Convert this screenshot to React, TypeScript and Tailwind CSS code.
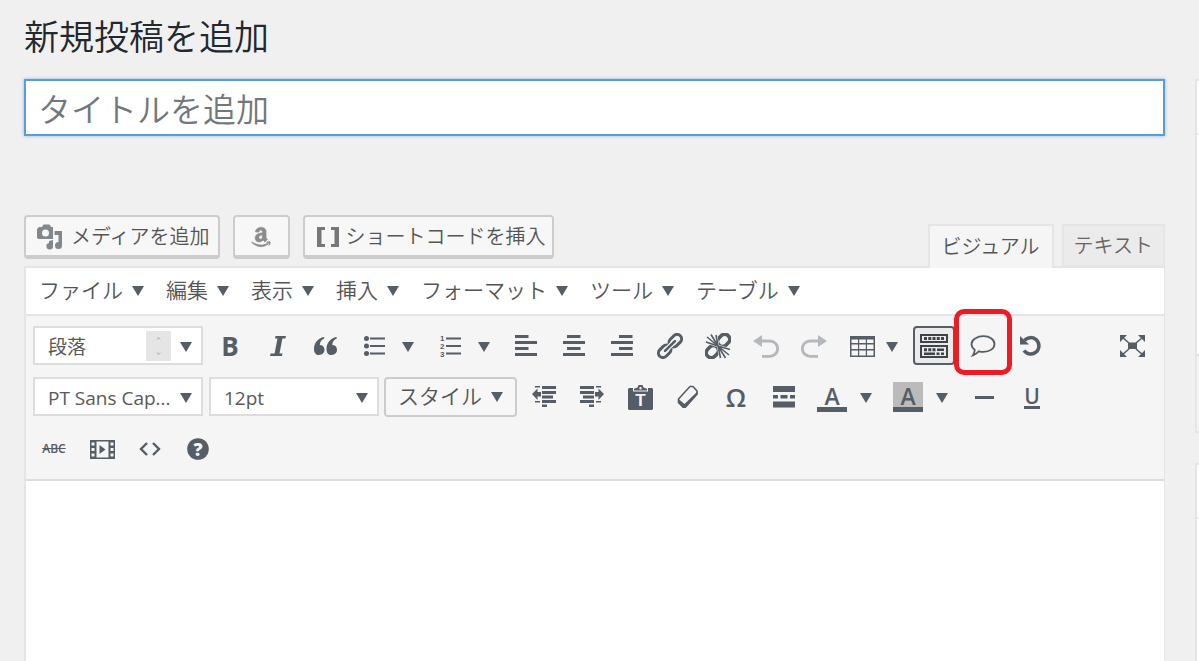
import React from 'react'
import { FaAmazon } from 'react-icons/fa'

interface IconProps {
    w: number
    h: number
    className?: string
    children: React.ReactNode
}

function Icon({ w, h, className, children }: IconProps) {
    return (
        <svg width={w} height={h} viewBox={`0 0 ${w} ${h}`} className={className} fill="currentColor" aria-hidden="true">
            {children}
        </svg>
    )
}

function Caret() {
    return (
        <Icon w={12} h={10} className="mt-[2px] shrink-0 text-[#555d66]">
            <path d="M0 0h12L6 10z" />
        </Icon>
    )
}

function MediaIcon() {
    return (
        <Icon w={26} h={26} className="text-[#82878c]">
            <path fillRule="evenodd" d="M2 3h3l1.500-2.500h6L14 3h2v12H1.500L0 14V5zM8.500 5.500a3.500 3.500 0 1 0 0 7a3.500 3.500 0 1 0 0-7z" />
            <path d="M17.500 7H25v14.500a3.500 3.500 0 1 1-3.500-3.500V11h-4z" />
            <path d="M12 17l4-1v6a3.300 3.300 0 1 1-4-3z" />
        </Icon>
    )
}

function BracketsIcon() {
    return (
        <Icon w={22} h={20} className="text-[#777]">
            <path d="M0 0h8v3H4.500v14H8v3H0zM22 0h-8v3h3.500v14H14v3h8z" />
        </Icon>
    )
}

function ItalicIcon() {
    return (
        <Icon w={16} h={20}>
            <path d="M5.500 0H16l-.6 2.600h-3L9.500 17.400h3l-.6 2.600H0l.6-2.600h4L7.500 2.600H5z" />
        </Icon>
    )
}

function QuoteIcon() {
    return (
        <Icon w={24} h={18}>
            <path d="M10 0C4 1 0 6 0 12c0 4 2 6 5 6s5.500-2 5.500-5.200S8.500 8 5.800 8C5.800 5 7.500 2.500 10.500 1.200z" />
            <path d="M22.500 0c-6 1-10 6-10 12c0 4 2 6 5 6s5.500-2 5.500-5.200S21 8 18.300 8c0-3 1.700-5.500 4.700-6.800z" />
        </Icon>
    )
}

function BulletIcon() {
    return (
        <Icon w={21} h={20}>
            <circle cx="2.5" cy="2.500" r="2.500" />
            <circle cx="2.500" cy="10" r="2.500" />
            <circle cx="2.500" cy="17.500" r="2.500" />
            <path d="M6 1.500h15v2H6zM6 9h15v2H6zM6 16.500h15v2H6z" />
        </Icon>
    )
}

function NumberIcon() {
    return (
        <Icon w={21} h={26}>
            <g fontFamily="Liberation Sans, sans-serif" fontSize="8" fontWeight="700">
                <text x="0" y="8">1</text>
                <text x="0" y="16">2</text>
                <text x="0" y="24">3</text>
            </g>
            <path d="M6 4.500h15v2H6zM6 12h15v2H6zM6 19.500h15v2H6z" />
        </Icon>
    )
}

function AlignIcon({ side }: { side: 'left' | 'center' | 'right' }) {
    const x = side === 'left' ? 0 : side === 'center' ? 4 : 8
    return (
        <Icon w={22} h={22}>
            <rect x={x} y="0" width="13.500" height="3" />
            <rect x="0" y="6" width="22" height="3" />
            <rect x={x} y="12" width="13.500" height="3" />
            <rect x="0" y="18" width="22" height="3" />
        </Icon>
    )
}

function LinkIcon() {
    return (
        <Icon w={26} h={26}>
            <g transform="rotate(-45 13 13)" fill="none" stroke="currentColor">
                <rect x="-1.500" y="8.500" width="14" height="9" rx="4.500" strokeWidth="3" />
                <rect x="13.500" y="8.500" width="14" height="9" rx="4.500" strokeWidth="3" />
                <path d="M6.500 13h13" stroke="#f5f5f5" strokeWidth="5" />
                <path d="M6 13h14" strokeWidth="2.600" strokeLinecap="round" />
            </g>
        </Icon>
    )
}

function UnlinkIcon() {
    const rays = 'M13 13L1 9M13 13L2 4M13 13L6 1.500M13 13L11 2M13 13l12 3.500M13 13l11 9M13 13l7.500 12M13 13l2.500 12'
    return (
        <Icon w={26} h={26}>
            <g transform="rotate(-45 13 13)" fill="none" stroke="currentColor" strokeWidth="3.600">
                <rect x="-1.500" y="8" width="13" height="10" rx="5" />
                <rect x="14.500" y="8" width="13" height="10" rx="5" />
            </g>
            <path d={rays} fill="none" stroke="#f5f5f5" strokeWidth="2.600" />
            <path d={rays} fill="none" stroke="currentColor" strokeWidth="1.600" />
        </Icon>
    )
}

function UndoIcon({ flip }: { flip?: boolean }) {
    return (
        <Icon w={26} h={23} className={flip ? '-scale-x-100' : ''}>
            <path d="M9 0v12L0 6z" />
            <path d="M8 6h9a7.500 7.500 0 0 1 0 15.300H9" fill="none" stroke="currentColor" strokeWidth="2.800" />
        </Icon>
    )
}

function TableIcon() {
    return (
        <Icon w={25} h={21}>
            <path fillRule="evenodd" d="M0 0h25v21H0zM1.500 3.500v3.500h6.500V3.500zM9.200 3.500v3.500h6.600V3.500zM17 3.500v3.500h6.500V3.500zM1.500 8.500v4.500h6.500V8.500zM9.200 8.500v4.500h6.600V8.500zM17 8.500v4.500h6.500V8.500zM1.500 14.500v5h6.500v-5zM9.200 14.500v5h6.600v-5zM17 14.500v5h6.500v-5z" />
        </Icon>
    )
}

function KeyboardIcon() {
    return (
        <Icon w={28} h={24} className="text-[#3f444b]">
            <g fill="none" stroke="currentColor" strokeWidth="2">
                <path d="M1 1h26v7H1zM1 12h26v11H1z" />
                <path d="M4 4.500h20" strokeWidth="3" strokeDasharray="3 1.250" />
                <path d="M4 15.700h12.500" strokeWidth="3" strokeDasharray="3 1.250" />
                <path d="M17 15.700h7M4 19.800h11M16.500 19.800h3M21 19.800h3" strokeWidth="2.600" />
            </g>
        </Icon>
    )
}

function BalloonIcon() {
    return (
        <Icon w={26} h={22}>
            <path
                d="M13.500 1.200c6.300 0 11 3.300 11 7.800s-4.700 7.900-11 7.900c-1.700 0-3.300-.2-4.700-.6C7.300 18.200 5.500 19.600 3 20.300c1-1.300 1.700-3 1.700-5.500C2.700 13.300 1.500 11.300 1.500 9c0-4.500 5.700-7.800 12-7.800z"
                fill="none"
                stroke="currentColor"
                strokeWidth="1.800"
            />
        </Icon>
    )
}

function ResetIcon() {
    return (
        <Icon w={22} h={22}>
            <path d="M4.500 5.500A8.200 8.200 0 1 1 4 15.500" fill="none" stroke="currentColor" strokeWidth="3.500" />
            <path d="M0 1v8.500h9z" />
        </Icon>
    )
}

function FullscreenIcon() {
    return (
        <Icon w={25} h={22}>
            <path d="M8 7.500h9v6.500H8z" />
            <path d="M0 0h7L0 7zM25 0h-7l7 7zM0 22h7l-7-7zM25 22h-7l7-7z" />
            <path d="M2 2l7 6M23 2l-7 6M2 20l7-6M23 20l-7-6" stroke="currentColor" strokeWidth="1.600" />
        </Icon>
    )
}

function OutdentIcon({ flip }: { flip?: boolean }) {
    return (
        <Icon w={24} h={24} className={flip ? '-scale-x-100' : ''}>
            <path d="M10 1h14v3H10zM10 6h14v3H10zM10 10.500h11v3H10zM10 15h14v3H10zM10 19.500h5v2.500h-5z" />
            <path d="M3 1h5v1.500H3zM3 16h5v1.500H3z" />
            <path d="M0 9l5.500-5.500V7H9v4.500H5.500V15z" />
        </Icon>
    )
}

function PasteIcon() {
    return (
        <Icon w={25} h={25}>
            <path d="M1 3h4v3.500h15V3h4l1 1v20l-1 1H1l-1-1V4z" />
            <path fillRule="evenodd" d="M6 5.500V3.800L9.500 2.500L10.500 0h4l1 2.500L19 3.800v1.700zM12.500 2a1.200 1.200 0 1 0 0 2.400a1.200 1.200 0 1 0 0-2.400z" />
            <text x="12.500" y="21" textAnchor="middle" fill="#f5f5f5" fontFamily="Liberation Sans, sans-serif" fontSize="17" fontWeight="700">T</text>
        </Icon>
    )
}

function EraserIcon() {
    return (
        <Icon w={22} h={24}>
            <path d="M13 1.500h3l4 4.500v3L8.500 22H6L1.500 17.500V14z" fill="none" stroke="currentColor" strokeWidth="1.600" strokeLinejoin="round" />
            <path d="M1 13.500l6.500 5.500L20.500 6.500V9.500L8.500 23H6L1 17.500z" />
        </Icon>
    )
}

function MoreIcon() {
    return (
        <Icon w={22} h={22}>
            <path d="M0 0h22v6H0zM0 15.500h22v6H0zM0 9h5v3.500H0zM7.500 9h7v3.500h-7zM17 9h5v3.500h-5z" />
        </Icon>
    )
}

function VideoIcon() {
    return (
        <Icon w={25} h={19}>
            <path fillRule="evenodd" d="M0 0h25v19H0zM6.500 1.500v16h12v-16zM1.500 2.500v3h3v-3zM1.500 8v3h3V8zM1.500 13.500v3h3v-3zM20.500 2.500v3h3v-3zM20.500 8v3h3V8zM20.500 13.500v3h3v-3z" />
            <path d="M9.500 5l6 4.500l-6 4.500z" />
        </Icon>
    )
}

function CodeIcon() {
    return (
        <Icon w={22} h={14}>
            <path d="M8 1L2 7l6 6M14 1l6 6l-6 6" fill="none" stroke="currentColor" strokeWidth="2.400" />
        </Icon>
    )
}

function HelpIcon() {
    return (
        <Icon w={22} h={22}>
            <circle cx="11" cy="11" r="10.800" />
            <text x="11" y="17.500" textAnchor="middle" fill="#f5f5f5" fontFamily="Open Sans, sans-serif" fontSize="18" fontWeight="800">?</text>
        </Icon>
    )
}

interface ToolProps {
    label: string
    children: React.ReactNode
}

function Tool({ label, children }: ToolProps) {
    return (
        <button type="button" aria-label={label} className="relative flex h-10 w-12 shrink-0 items-center justify-center">
            {children}
        </button>
    )
}

// button with a drop-down arrow next to it
function SplitTool({ label, children }: ToolProps) {
    return (
        <div className="flex w-[76px] shrink-0">
            <Tool label={label}>{children}</Tool>
            <button type="button" aria-label={label + ' ▼'} className="flex items-center pl-1">
                <Caret />
            </button>
        </div>
    )
}

interface ListBoxProps {
    label: string
    value: string
    children?: React.ReactNode
}

function ListBox({ label, value, children }: ListBoxProps) {
    return (
        <div className="relative h-[39px] w-[170px] shrink-0">
            <select
                aria-label={label}
                className="h-full w-full appearance-none border-2 border-[#ddd] bg-white pt-[2px] pl-[13px] text-[19px] leading-6 text-[#595959]"
            >
                <option>{value}</option>
            </select>
            <span className="pointer-events-none absolute inset-y-0 right-[11px] flex items-center gap-[9px]">
                {children}
                <Caret />
            </span>
        </div>
    )
}

const menus = ['ファイル', '編集', '表示', '挿入', 'フォーマット', 'ツール', 'テーブル']

const mediaButton =
    'flex h-11 items-center rounded border-2 border-b-4 border-[#ccc] bg-[#f7f7f7] text-xl leading-7 text-[#555]'

export default function App() {
    return (
        <div className="flex min-h-screen overflow-hidden bg-[#f0f0f0] pl-6 font-['Open_Sans','Noto_Sans_CJK_JP',sans-serif] text-[#555]">
            <main className="flex min-w-0 flex-1 flex-col">
                <h1 className="mt-[15px] text-[35px] leading-[44px] font-[350] text-[#23282d]">新規投稿を追加</h1>

                <input
                    type="text"
                    aria-label="タイトルを追加"
                    placeholder="タイトルを追加"
                    className="mt-5 h-[57px] w-full border-2 border-[#5b9dd9] bg-white px-3 pt-1 text-[33px] font-[350] shadow-[0_0_3px_rgba(30,140,190,0.5)] outline-none placeholder:text-[#72777c]"
                />

                <div className="mt-[79px] flex h-[52px] justify-between">
                    <div className="flex gap-[13px]">
                        <button type="button" className={mediaButton + ' gap-2 pt-[2px] pl-[11px] pr-2 font-[350]'}>
                            <MediaIcon />
                            メディアを追加
                        </button>
                        <button type="button" aria-label="Amazon" className={mediaButton + ' w-[57px] justify-center pt-[2px]'}>
                            <FaAmazon size={22} color="#8c8c8c" stroke="#8c8c8c" strokeWidth={16} />
                        </button>
                        <button type="button" className={mediaButton + ' gap-[7px] pt-[2px] pl-3 pr-[6px] font-[350]'}>
                            <BracketsIcon />
                            ショートコードを挿入
                        </button>
                    </div>
                    <div className="mt-[9px] flex gap-2 text-xl leading-7 font-[350]">
                        <button type="button" className="z-10 h-11 border-2 border-b-0 border-[#e5e5e5] bg-[#f5f5f5] px-3">
                            ビジュアル
                        </button>
                        <button type="button" className="h-[43px] border-2 border-[#e5e5e5] bg-[#ebebeb] px-[10px] text-[#666]">
                            テキスト
                        </button>
                    </div>
                </div>

                <section className="-mt-px flex flex-1 flex-col border-2 border-r border-b-0 border-[#e5e5e5] bg-white">
                    <nav className="flex h-[46px] items-center gap-[22px] pb-[2px] pl-[13px] text-[21px] leading-8 font-[350]">
                        {menus.map((m) => (
                            <button key={m} type="button" className="flex items-center gap-[9px]">
                                {m}
                                <Caret />
                            </button>
                        ))}
                    </nav>

                    <div className="flex h-[167px] flex-col gap-[11px] border-y-2 border-[#ddd] border-t-[#e5e5e5] bg-[#f5f5f5] pt-[10px] text-[#555d66]">
                        <div className="flex h-10 items-start pl-[7px]">
                            <ListBox label="段落" value="段落">
                                <span className="flex h-[30px] w-[25px] flex-col items-center justify-between bg-[#e5e5e5] py-[6px]">
                                    <Icon w={5} h={3} className="text-[#aaa]"><path d="M0 3L2.500 0L5 3L2.500 1.500z" /></Icon>
                                    <Icon w={5} h={3} className="text-[#aaa]"><path d="M0 0L2.500 3L5 0L2.500 1.500z" /></Icon>
                                </span>
                            </ListBox>
                            <div className="ml-[3px] flex flex-1 items-start">
                                <Tool label="太字"><span className="text-[26px] leading-8 font-bold">B</span></Tool>
                                <Tool label="イタリック"><ItalicIcon /></Tool>
                                <Tool label="引用"><QuoteIcon /></Tool>
                                <SplitTool label="番号なしリスト"><BulletIcon /></SplitTool>
                                <SplitTool label="番号付きリスト"><NumberIcon /></SplitTool>
                                <Tool label="左寄せ"><AlignIcon side="left" /></Tool>
                                <Tool label="中央揃え"><AlignIcon side="center" /></Tool>
                                <Tool label="右寄せ"><AlignIcon side="right" /></Tool>
                                <Tool label="リンクの挿入"><LinkIcon /></Tool>
                                <Tool label="リンクの削除"><UnlinkIcon /></Tool>
                                <span className="flex text-[#b4b8bc]">
                                    <Tool label="取り消し"><UndoIcon /></Tool>
                                    <Tool label="やり直し"><UndoIcon flip /></Tool>
                                </span>
                                <button type="button" aria-label="テーブル" className="flex h-10 w-[75px] shrink-0 items-center gap-[11px] pl-3">
                                    <TableIcon />
                                    <Caret />
                                </button>
                                <button
                                    type="button"
                                    aria-label="ツールバー切り替え"
                                    aria-pressed="true"
                                    className="mr-1 flex h-[39px] w-[42px] shrink-0 items-center justify-center rounded-sm border-2 border-[#555d66] bg-[#ebebeb]"
                                >
                                    <KeyboardIcon />
                                </button>
                                <Tool label="吹き出し">
                                    <BalloonIcon />
                                    <span className="pointer-events-none absolute -inset-x-[5px] -top-[17px] h-[66px] rounded-[10px] border-[5px] border-[#ed1c24]"></span>
                                </Tool>
                                <Tool label="リセット"><ResetIcon /></Tool>
                            </div>
                            <div className="mr-2">
                                <Tool label="フルスクリーン"><FullscreenIcon /></Tool>
                            </div>
                        </div>

                        <div className="flex h-10 items-start pl-[7px]">
                            <ListBox label="フォントファミリー" value="PT Sans Cap..." />
                            <div className="mr-[5px] ml-[6px]">
                                <ListBox label="フォントサイズ" value="12pt" />
                            </div>
                            <button
                                type="button"
                                className="mr-[3px] flex h-10 w-[133px] shrink-0 items-center gap-[9px] rounded-sm border-2 border-[#ccc] bg-[#f7f7f7] pb-[2px] pl-3 text-[21px] leading-8 font-[350] text-[#555]"
                            >
                                スタイル
                                <Caret />
                            </button>
                            <Tool label="インデントを減らす"><OutdentIcon /></Tool>
                            <Tool label="インデントを増やす"><OutdentIcon flip /></Tool>
                            <Tool label="テキストとしてペースト"><PasteIcon /></Tool>
                            <Tool label="書式設定をクリア"><EraserIcon /></Tool>
                            <Tool label="特殊文字"><span className="text-[26px] leading-8 font-semibold">Ω</span></Tool>
                            <Tool label="続きを読む"><MoreIcon /></Tool>
                            <SplitTool label="テキスト色">
                                <span className="h-[30px] w-[30px] border-b-[5px] border-[#555d66] text-[23px] leading-7 font-semibold">A</span>
                            </SplitTool>
                            <SplitTool label="背景色">
                                <span className="h-[30px] w-[30px] border-b-[5px] border-[#555d66] bg-[#bbb] text-[23px] leading-7 font-semibold">A</span>
                            </SplitTool>
                            <Tool label="横ライン"><Icon w={19} h={3}><path d="M0 0h19v3H0z" /></Icon></Tool>
                            <Tool label="下線">
                                <span className="border-b-[3px] border-[#555d66] text-[21px] leading-5 font-semibold">U</span>
                            </Tool>
                        </div>

                        <div className="flex h-[42px] items-center pl-1">
                            <Tool label="打ち消し"><span className="text-xs font-semibold line-through">ABC</span></Tool>
                            <Tool label="動画を挿入"><VideoIcon /></Tool>
                            <Tool label="ソースコード"><CodeIcon /></Tool>
                            <Tool label="ヘルプ"><HelpIcon /></Tool>
                        </div>
                    </div>

                    <textarea aria-label="本文" className="w-full flex-1 resize-none bg-white p-4 outline-none" />
                </section>
            </main>

            <aside className="ml-[30px] w-1 shrink-0 pt-[79px]">
                <div className="border-2 border-r-0 border-[#e5e5e5] bg-white">
                    <div className="h-[54px] border-b-2 border-[#eee]"></div>
                    <div className="h-[219px]"></div>
                    <div className="h-[77px] border-t-2 border-[#ddd] bg-[#f5f5f5]"></div>
                </div>
                <div className="mt-[30px] h-[200px] border-2 border-r-0 border-[#e5e5e5] bg-white">
                    <div className="h-[54px] border-b-2 border-[#eee]"></div>
                </div>
            </aside>
        </div>
    )
}
